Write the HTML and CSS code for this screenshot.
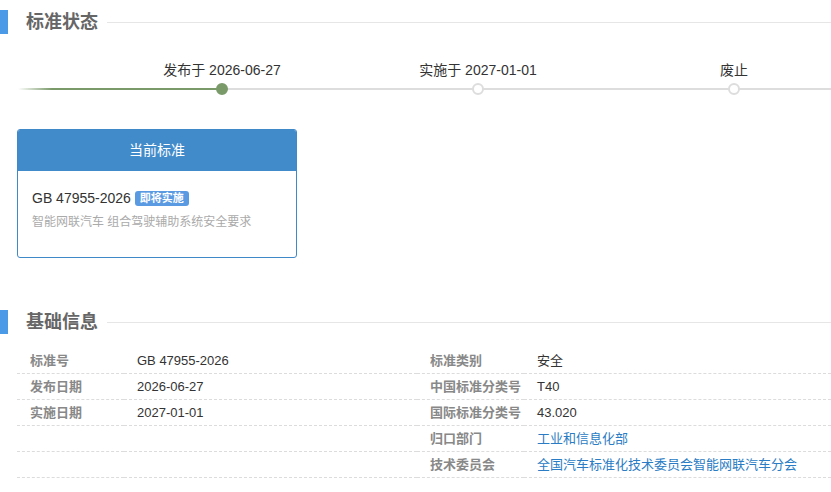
FILE: index.html
```html
<!DOCTYPE html>
<html lang="zh-CN">
<head>
<meta charset="utf-8">
<title>标准状态</title>
<link rel="stylesheet" href="styles.css">
</head>
<body>
<section class="section section-status">
  <div class="section-head">
    <span class="bar"></span>
    <h2 class="title">标准状态</h2>
    <span class="rule"></span>
  </div>
  <div class="timeline">
    <div class="step">
      <div class="step-label">发布于 2026-06-27</div>
      <div class="dot dot-done"></div>
    </div>
    <div class="step">
      <div class="step-label">实施于 2027-01-01</div>
      <div class="dot"></div>
    </div>
    <div class="step">
      <div class="step-label">废止</div>
      <div class="dot"></div>
    </div>
  </div>
  <div class="card">
    <div class="card-head">当前标准</div>
    <div class="card-body">
      <div class="card-code">GB 47955-2026 <span class="badge">即将实施</span></div>
      <div class="card-name">智能网联汽车 组合驾驶辅助系统安全要求</div>
    </div>
  </div>
</section>
<section class="section section-info">
  <div class="section-head">
    <span class="bar"></span>
    <h2 class="title">基础信息</h2>
    <span class="rule"></span>
  </div>
  <div class="info">
    <div class="cell label">标准号</div>
    <div class="cell value">GB 47955-2026</div>
    <div class="cell label">标准类别</div>
    <div class="cell value">安全</div>

    <div class="cell label">发布日期</div>
    <div class="cell value">2026-06-27</div>
    <div class="cell label">中国标准分类号</div>
    <div class="cell value">T40</div>

    <div class="cell label">实施日期</div>
    <div class="cell value">2027-01-01</div>
    <div class="cell label">国际标准分类号</div>
    <div class="cell value">43.020</div>

    <div class="cell label"></div>
    <div class="cell value"></div>
    <div class="cell label">归口部门</div>
    <div class="cell value"><a class="link" href="#">工业和信息化部</a></div>

    <div class="cell label"></div>
    <div class="cell value"></div>
    <div class="cell label">技术委员会</div>
    <div class="cell value"><a class="link" href="#">全国汽车标准化技术委员会智能网联汽车分会</a></div>
  </div>
</section>
</body>
</html>
```

FILE: styles.css
```css
* { box-sizing: border-box; }
html, body {
  margin: 0;
  padding: 0;
  background: #fff;
}
body {
  font-family: "Liberation Sans", "Noto Sans CJK SC", sans-serif;
  color: #333;
  width: 831px;
  overflow: hidden;
}

.section-head {
  display: flex;
  align-items: center;
  height: 24px;
}
.section-status { padding-top: 10px; }
.section-info { margin-top: 52px; }

.bar {
  width: 8px;
  height: 24px;
  background: #4a9ae8;
  flex: none;
}
.title {
  margin: 0 0 0 18px;
  font-size: 18px;
  line-height: 24px;
  font-weight: bold;
  color: #666;
}
.rule {
  flex: 1;
  height: 1px;
  margin-left: 9px;
  background: #e6e6e6;
}

/* timeline */
.timeline {
  margin: 26px 0 0 18px;
  padding-left: 76px;
  display: grid;
  grid-template-columns: repeat(3, 256px);
  background-image: linear-gradient(to right,
    rgba(122,154,106,0) 0,
    #7a9a6a 34px,
    #7a9a6a 204px,
    #dddddd 204px,
    #dddddd 100%);
  background-repeat: no-repeat;
  background-size: 100% 2px;
  background-position: 0 28px;
  overflow: hidden;
}
.step {
  display: flex;
  flex-direction: column;
  align-items: center;
}
.step-label {
  font-size: 14px;
  line-height: 20px;
  height: 20px;
  color: #333;
  white-space: nowrap;
}
.dot {
  width: 12px;
  height: 12px;
  margin: 3px 0;
  border-radius: 50%;
  background: #fff;
  border: 2px solid #dddddd;
}
.dot-done {
  background: #7a9a6a;
  border-color: #7a9a6a;
}

/* card */
.card {
  margin: 31px 0 0 17px;
  width: 280px;
  border: 1px solid #3f89c8;
  border-radius: 3px;
  overflow: hidden;
}
.card-head {
  height: 41px;
  background: #428bca;
  color: #fff;
  font-size: 14px;
  line-height: 41px;
  text-align: center;
}
.card-body {
  padding: 17px 14px 25px;
}
.card-code {
  font-size: 14px;
  line-height: 20px;
  color: #333;
  white-space: nowrap;
}
.badge {
  display: inline-block;
  vertical-align: 1px;
  background: #5a9ae2;
  color: #fff;
  font-size: 11px;
  font-weight: bold;
  line-height: 15px;
  padding: 0 5px;
  border-radius: 3px;
}
.card-name {
  margin-top: 4px;
  font-size: 12px;
  line-height: 20px;
  color: #aaa;
  white-space: nowrap;
}

/* info table */
.info {
  margin: 14px 0 0 17px;
  display: grid;
  grid-template-columns: 107px 293px 107px 1fr;
}
.cell {
  height: 26px;
  line-height: 25px;
  padding-left: 13px;
  font-size: 13px;
  border-bottom: 1px dashed #dcdcdc;
  white-space: nowrap;
}
.label {
  color: #888;
  font-weight: bold;
}
.value {
  color: #333;
}
.link {
  color: #2a7cc4;
  text-decoration: none;
}
```
